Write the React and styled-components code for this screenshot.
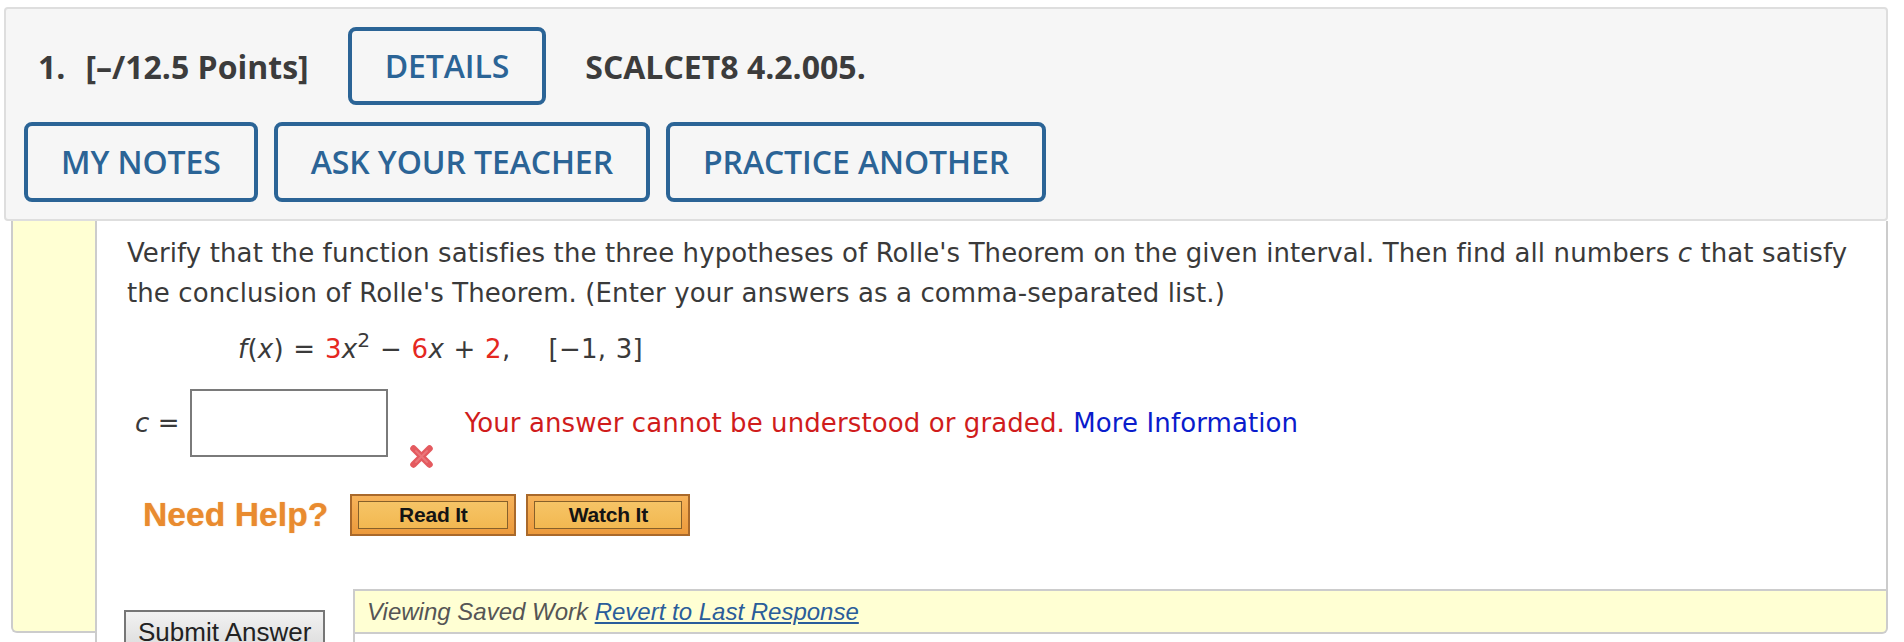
import React from "react";
import styled, { createGlobalStyle } from "styled-components";

const GlobalStyle = createGlobalStyle`
  html, body { margin: 0; padding: 0; background: #fff; }
  body { font-family: "DejaVu Sans", Verdana, sans-serif; }
`;

const Wrapper = styled.div`
  padding: 7px 16px 0 4px;
`;

const HeaderPanel = styled.div`
  box-sizing: border-box;
  background: #f6f6f6;
  border: 2px solid #dedede;
  border-radius: 4px;
  padding: 18px 0 17px 18px;
  display: flex;
  flex-direction: column;
  gap: 17px;
  font-family: "Open Sans", sans-serif;
  font-size: 32px;
  color: #3c3c3c;
`;

const HeaderRow = styled.div`
  display: flex;
  align-items: center;
  gap: ${(p) => p.$gap}px;
  padding-left: ${(p) => p.$indent || 0}px;
`;

const Title = styled.span`
  font-weight: 700;
  white-space: nowrap;
`;

const Num = styled.span`
  margin-right: 20px;
`;

const OutlineButton = styled.button`
  box-sizing: border-box;
  height: ${(p) => p.$h}px;
  padding: 0 33px;
  border: 4px solid #2b6496;
  border-radius: 8px;
  background: transparent;
  color: #2b6496;
  font-family: "Open Sans", sans-serif;
  font-weight: 600;
  font-size: 32px;
  line-height: 1;
  letter-spacing: -0.1px;
  display: inline-flex;
  align-items: center;
  white-space: nowrap;
`;

const QuestionBody = styled.div`
  display: flex;
  margin-left: 7px;
`;

const Gutter = styled.div`
  box-sizing: border-box;
  width: 84px;
  flex: none;
  background: #ffffd3;
  border-left: 2px solid #cccccc;
  border-bottom: 2px solid #cccccc;
  border-bottom-left-radius: 6px;
  margin-bottom: 20px;
`;

const ContentCol = styled.div`
  flex: 1;
  min-width: 0;
  border-left: 2px solid #cccccc;
  display: flex;
  flex-direction: column;
`;

const Main = styled.div`
  border-right: 2px solid #cccccc;
  padding: 12px 30px 53px 30px;
  font-family: "DejaVu Sans", Verdana, sans-serif;
  font-size: 26px;
  letter-spacing: 0.1px;
  color: #3a3a3a;
`;

const Prompt = styled.p`
  margin: 0;
  line-height: 40px;
`;

const Formula = styled.div`
  margin-top: 16px;
  padding-left: 111px;
  line-height: 40px;
  white-space: pre;
  word-spacing: 1px;
  letter-spacing: 0.25px;
`;

const Var = styled.i``;

const Coef = styled.span`
  color: #e5281f;
`;

const Sup = styled.sup`
  font-size: 0.78em;
  line-height: 0;
  vertical-align: 0.55em;
`;

const AnswerRow = styled.div`
  display: flex;
  align-items: flex-start;
  margin-top: 20px;
  height: 80px;
  padding-left: 8px;
`;

const CLabel = styled.span`
  margin-top: 14px;
  line-height: 40px;
  margin-right: 10px;
  white-space: nowrap;
`;

const AnswerBox = styled.div`
  box-sizing: border-box;
  width: 198px;
  height: 68px;
  border: 2px solid #7a7a7a;
  background: #fff;
`;

const WrongMark = styled.svg`
  margin-left: 20px;
  margin-top: 54px;
  flex: none;
`;

const ErrorText = styled.span`
  margin-left: 30px;
  margin-top: 14px;
  line-height: 40px;
  color: #d01c1c;
  white-space: nowrap;
`;

const MoreLink = styled.a`
  color: #0a1ccc;
  text-decoration: none;
`;

const HelpRow = styled.div`
  display: flex;
  align-items: center;
  margin-top: 25px;
  padding-left: 16px;
  gap: 10px;
`;

const HelpLabel = styled.span`
  font-family: "Liberation Sans", Arial, sans-serif;
  font-weight: 700;
  font-size: 33.5px;
  color: #e98b2f;
  text-shadow: 0 0 1px rgba(233, 139, 47, 0.7);
  margin-right: 12px;
  white-space: nowrap;
`;

const HelpButton = styled.div`
  box-sizing: border-box;
  width: ${(p) => p.$w}px;
  height: 42px;
  border: 2px solid #a9692b;
  background: linear-gradient(#f7b35a, #ec9a3c);
  padding: 5px 6px;
`;

const HelpInner = styled.div`
  box-sizing: border-box;
  height: 100%;
  border: 1px solid #86602a;
  background: linear-gradient(#f6c466, #f2b851);
  display: flex;
  align-items: center;
  justify-content: center;
  font-family: "Liberation Sans", Arial, sans-serif;
  font-weight: 700;
  font-size: 21px;
  color: #141414;
  letter-spacing: -0.2px;
`;

const Footer = styled.div`
  display: flex;
  height: 64px;
`;

const SubmitCell = styled.div`
  box-sizing: border-box;
  width: 256px;
  flex: none;
  padding: 21px 0 0 27px;
`;

const SubmitButton = styled.button`
  box-sizing: border-box;
  border: 2px solid #767676;
  background: linear-gradient(#f2f2f2, #dadada);
  padding: 3px 12px 4px;
  font-family: "Liberation Sans", Arial, sans-serif;
  font-size: 26px;
  line-height: 34px;
  color: #222;
  white-space: nowrap;
`;

const SavedCell = styled.div`
  flex: 1;
  border-left: 2px solid #cccccc;
`;

const SavedBar = styled.div`
  box-sizing: border-box;
  height: 45px;
  background: #ffffd3;
  border-top: 2px solid #cccccc;
  border-bottom: 2px solid #cccccc;
  border-right: 2px solid #cccccc;
  border-bottom-right-radius: 6px;
  display: flex;
  align-items: center;
  padding-left: 12px;
  font-family: "Liberation Sans", Arial, sans-serif;
  font-style: italic;
  font-size: 24px;
  color: #555;
  white-space: pre;
`;

const RevertLink = styled.a`
  color: #2a5d9a;
  text-decoration: underline;
`;

export default function App() {
  return (
    <>
      <GlobalStyle />
      <Wrapper>
        <HeaderPanel>
          <HeaderRow $gap={39} $indent={14}>
            <Title>
              <Num>1.</Num>[–/12.5 Points]
            </Title>
            <OutlineButton $h={78}>DETAILS</OutlineButton>
            <Title>SCALCET8 4.2.005.</Title>
          </HeaderRow>
          <HeaderRow $gap={16}>
            <OutlineButton $h={80}>MY NOTES</OutlineButton>
            <OutlineButton $h={80}>ASK YOUR TEACHER</OutlineButton>
            <OutlineButton $h={80}>PRACTICE ANOTHER</OutlineButton>
          </HeaderRow>
        </HeaderPanel>

        <QuestionBody>
          <Gutter />
          <ContentCol>
            <Main>
              <Prompt>
                Verify that the function satisfies the three hypotheses of Rolle's Theorem on the
                given interval. Then find all numbers <i>c</i> that satisfy the conclusion of Rolle's
                Theorem. (Enter your answers as a comma-separated list.)
              </Prompt>
              <Formula>
                <Var>f</Var>(<Var>x</Var>) = <Coef>3</Coef>
                <Var>x</Var>
                <Sup>2</Sup> − <Coef>6</Coef>
                <Var>x</Var> + <Coef>2</Coef>,{"    "}[−1, 3]
              </Formula>
              <AnswerRow>
                <CLabel>
                  <i>c</i> =
                </CLabel>
                <AnswerBox />
                <WrongMark width="27" height="27" viewBox="0 0 27 27">
                  <path
                    d="M5.5 5.5 L21.5 21.5 M21.5 5.5 L5.5 21.5"
                    stroke="#e45a5f"
                    strokeWidth="6.5"
                    strokeLinecap="round"
                  />
                  <path
                    d="M8 8 L19 19 M19 8 L8 19"
                    stroke="#ef8a8c"
                    strokeWidth="2"
                    strokeLinecap="round"
                    opacity="0.6"
                  />
                </WrongMark>
                <ErrorText>
                  Your answer cannot be understood or graded. <MoreLink href="#">More Information</MoreLink>
                </ErrorText>
              </AnswerRow>
              <HelpRow>
                <HelpLabel>Need Help?</HelpLabel>
                <HelpButton $w={166}>
                  <HelpInner>Read It</HelpInner>
                </HelpButton>
                <HelpButton $w={164}>
                  <HelpInner>Watch It</HelpInner>
                </HelpButton>
              </HelpRow>
            </Main>
            <Footer>
              <SubmitCell>
                <SubmitButton>Submit Answer</SubmitButton>
              </SubmitCell>
              <SavedCell>
                <SavedBar>
                  Viewing Saved Work <RevertLink href="#">Revert to Last Response</RevertLink>
                </SavedBar>
              </SavedCell>
            </Footer>
          </ContentCol>
        </QuestionBody>
      </Wrapper>
    </>
  );
}
